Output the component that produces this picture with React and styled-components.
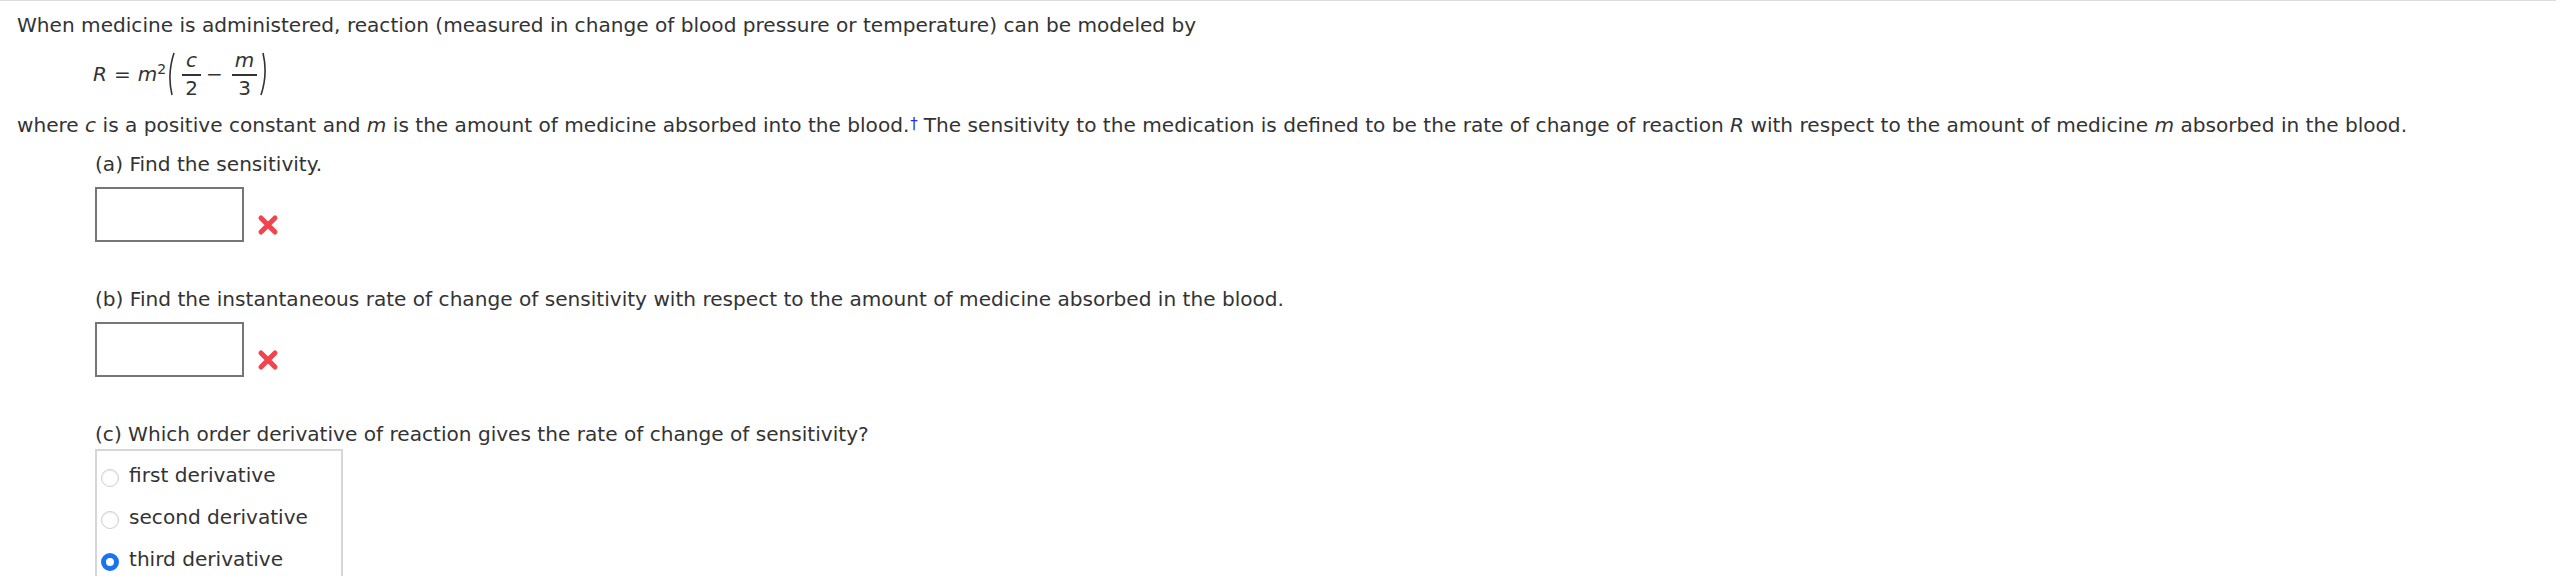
import React from "react";
import styled, { createGlobalStyle } from "styled-components";

const GlobalStyle = createGlobalStyle`
  body {
    margin: 0;
    background: #fff;
    font-family: "DejaVu Sans", Verdana, sans-serif;
    color: #333;
  }
`;

// page
const Page = styled.div`
  border-top: 1px solid #dcdcdc;
  padding: 9px 17px 0;
  font-size: 20.1px;
  line-height: 30px;
`;

const Para = styled.p`
  margin: 0;
`;

const Var = styled.i`
  font-style: italic;
`;

const Dagger = styled.span`
  color: #2b2bf0;
  font-size: 15px;
  vertical-align: 3px;
  margin: 0 6px 0 1px;
`;

// formula
const Formula = styled.div`
  display: flex;
  align-items: center;
  height: 56px;
  margin: 6px 0 7px 76px;
  font-size: 20px;
`;

const Sym = styled.span`
  margin: ${(p) => p.$m || "0"};
`;

const Sup = styled.span`
  font-size: 14px;
  line-height: 14px;
  align-self: flex-start;
  margin-top: 16px;
`;

const Paren = styled.svg`
  width: 8px;
  height: 44px;
  margin: ${(p) => p.$m || "0"};
`;

const Frac = styled.span`
  display: inline-flex;
  flex-direction: column;
  align-items: center;
  line-height: 22px;
`;

const Num = styled.span`
  padding: 0 ${(p) => p.$pad || "3px"} 3px;
  border-bottom: 2px solid #333;
`;

const Den = styled.span`
  padding-top: 1px;
`;

// parts
const Part = styled.div`
  margin-left: 78px;
  margin-top: ${(p) => p.$top || "0"};
`;

const AnswerRow = styled.div`
  display: flex;
  align-items: center;
  gap: 13px;
  margin-top: 8px;
  height: 55px;
`;

const AnswerBox = styled.div`
  box-sizing: border-box;
  width: 149px;
  height: 55px;
  border: 2px solid #767676;
  background: #fff;
`;

const Cross = styled.svg`
  width: 22px;
  height: 22px;
  margin-top: 20px;
`;

const Choices = styled.div`
  box-sizing: border-box;
  width: 248px;
  border: 2px solid #d6d6d6;
  padding: 3px 0 0 4px;
  height: 140px;
`;

const Choice = styled.label`
  display: flex;
  align-items: center;
  height: 42px;
  gap: 10px;
`;

const Radio = styled.span`
  box-sizing: border-box;
  width: 18px;
  height: 18px;
  border-radius: 50%;
  margin-top: 6px;
  border: ${(p) => (p.$checked ? "5px solid #1a73f0" : "1px solid #cfcfcf")};
  background: #fff;
  box-shadow: ${(p) => (p.$checked ? "none" : "inset 0 1px 2px rgba(0,0,0,0.08)")};
`;

function WrongMark() {
  return (
    <Cross viewBox="0 0 22 22">
      <path
        d="M4 4 L18 18 M18 4 L4 18"
        stroke="#f2444c"
        strokeWidth="5"
        strokeLinecap="round"
      />
    </Cross>
  );
}

function Answer() {
  return (
    <AnswerRow>
      <AnswerBox />
      <WrongMark />
    </AnswerRow>
  );
}

const options = [
  { id: 1, text: "first derivative", checked: false },
  { id: 2, text: "second derivative", checked: false },
  { id: 3, text: "third derivative", checked: true },
];

function App() {
  return (
    <>
      <GlobalStyle />
      <Page>
        <Para>
          When medicine is administered, reaction (measured in change of blood
          pressure or temperature) can be modeled by
        </Para>
        <Formula>
          <Var>R</Var>
          <Sym $m="0 7px">=</Sym>
          <Var>m</Var>
          <Sup>2</Sup>
          <Paren viewBox="0 0 8 44" $m="0 7px 0 1px">
            <path d="M7 1 Q0 22 5 43" fill="none" stroke="#333" strokeWidth="1.6" />
          </Paren>
          <Frac>
            <Num $pad="4px"><Var>c</Var></Num>
            <Den>2</Den>
          </Frac>
          <Sym $m="0 9px 0 5px">−</Sym>
          <Frac>
            <Num><Var>m</Var></Num>
            <Den>3</Den>
          </Frac>
          <Paren viewBox="0 0 8 44" $m="0 0 0 3px">
            <path d="M3 1 Q8 22 1 43" fill="none" stroke="#333" strokeWidth="1.6" />
          </Paren>
        </Formula>
        <Para>
          where <Var>c</Var> is a positive constant and <Var>m</Var> is the
          amount of medicine absorbed into the blood.
          <Dagger>†</Dagger>
          The sensitivity to the medication is defined to be the rate of change
          of reaction <Var>R</Var> with respect to the amount of medicine{" "}
          <Var>m</Var> absorbed in the blood.
        </Para>
        <Part $top="9px">
          <div>(a) Find the sensitivity.</div>
          <Answer />
        </Part>
        <Part $top="42px">
          <div>(b) Find the instantaneous rate of change of sensitivity with respect to the amount of medicine absorbed in the blood.</div>
          <Answer />
        </Part>
        <Part $top="42px">
          <div>(c) Which order derivative of reaction gives the rate of change of sensitivity?</div>
          <Choices>
            {options.map((o) => (
              <Choice key={o.id}>
                <Radio $checked={o.checked} />
                <span>{o.text}</span>
              </Choice>
            ))}
          </Choices>
        </Part>
      </Page>
    </>
  );
}

export default App;
